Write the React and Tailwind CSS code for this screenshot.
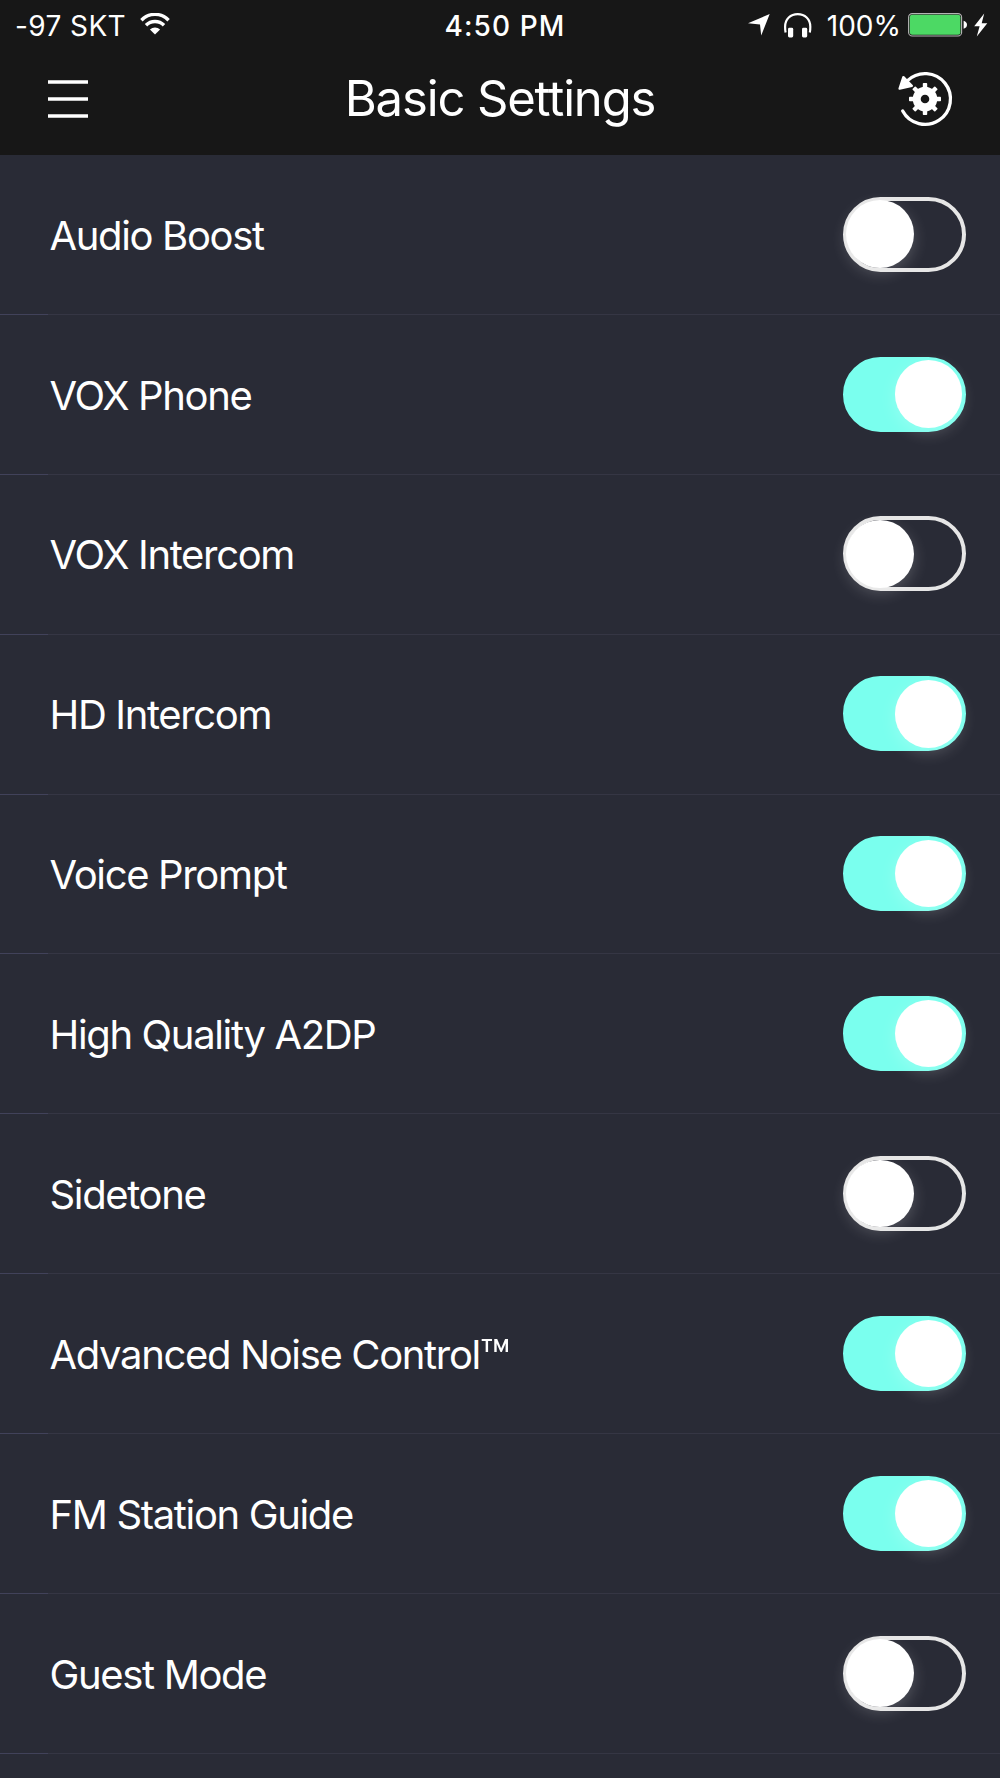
import React, { useState } from "react";

/* ================= DATA ================= */

const initialSettings = [
  { id: "audioBoost", label: "Audio Boost", enabled: false },
  { id: "voxPhone", label: "VOX Phone", enabled: true },
  { id: "voxIntercom", label: "VOX Intercom", enabled: false },
  { id: "hdIntercom", label: "HD Intercom", enabled: true },
  { id: "voicePrompt", label: "Voice Prompt", enabled: true },
  { id: "a2dp", label: "High Quality A2DP", enabled: true },
  { id: "sidetone", label: "Sidetone", enabled: false },
  { id: "noiseControl", label: "Advanced Noise Control", trademark: true, enabled: true },
  { id: "fmGuide", label: "FM Station Guide", enabled: true },
  { id: "guestMode", label: "Guest Mode", enabled: false },
];

/* ================= ICONS ================= */

function WifiIcon() {
  return (
    <svg width="30" height="22" viewBox="0 0 30 22" fill="none" stroke="white">
      <path d="M1.4 7.2C9 -0.6 21 -0.6 28.6 7.2" strokeWidth="3.4" />
      <path d="M6 12.3C11 7.2 19 7.2 24 12.3" strokeWidth="3.4" />
      <path d="M15 21.6L9.9 16.4C12.8 13.7 17.2 13.7 20.1 16.4Z" fill="white" stroke="none" />
    </svg>
  );
}

function LocationIcon() {
  return (
    <svg width="22" height="22" viewBox="0 0 22 22" fill="white">
      <path d="M21.7 0L13.2 21.6L12 10.6L0 9.3Z" />
    </svg>
  );
}

function HeadphonesIcon() {
  return (
    <svg width="28" height="25" viewBox="0 0 28 25" fill="none">
      <path
        d="M1.6 19.5C1.1 17.5 1.1 15 1.1 13.7C1.1 6 6.6 1.1 13.7 1.1S26.3 6 26.3 13.7C26.3 15 26.3 17.5 25.8 19.5"
        stroke="white"
        strokeWidth="2.2"
      />
      <rect x="4" y="14.8" width="5.2" height="9.6" rx="1.4" fill="white" />
      <rect x="18" y="14.8" width="5.2" height="9.6" rx="1.4" fill="white" />
    </svg>
  );
}

function BatteryIcon() {
  return (
    <svg width="60" height="24" viewBox="0 0 60 24" fill="none">
      <rect x="0.6" y="0.6" width="53" height="22.4" rx="3.6" stroke="#b4b4b4" strokeWidth="1.1" />
      <rect x="1.8" y="1.8" width="50.6" height="20" rx="2.4" fill="#4cd964" />
      <path d="M55.6 7.8C58 8.6 59 10 59 11.8S58 15 55.6 15.8Z" fill="white" />
    </svg>
  );
}

function BoltIcon() {
  return (
    <svg width="14" height="24" viewBox="0 0 14 24" fill="white">
      <path d="M10.2 0.5L0.2 13.2H5.6L2.8 23.6L13.3 10.3H7.7Z" />
    </svg>
  );
}

function MenuIcon() {
  return (
    <svg width="40" height="40" viewBox="0 0 40 40" stroke="white" strokeWidth="3.4">
      <path d="M0 3H40M0 20H40M0 37H40" />
    </svg>
  );
}

function ResetIcon() {
  return (
    <svg width="60" height="60" viewBox="0 0 60 60" fill="none" stroke="white">
      <path d="M7.7 42A25.4 25.4 0 1 0 12.5 11.6" strokeWidth="3.3" strokeLinecap="round" />
      <path
        d="M8.4 8.2L4.6 19.6L16.8 16.8Z"
        fill="white"
        strokeWidth="2.4"
        strokeLinejoin="round"
      />
      <circle cx="30" cy="30" r="8.3" strokeWidth="8" />
      {[0, 45, 90, 135, 180, 225, 270, 315].map((angle) => (
        <rect
          key={angle}
          x="27.8"
          y="14"
          width="4.4"
          height="6"
          rx="0.8"
          fill="white"
          stroke="none"
          transform={`rotate(${angle} 30 30)`}
        />
      ))}
    </svg>
  );
}

/* ================= TOGGLE ================= */

function Toggle({ checked, label, onChange }) {
  return (
    <button
      role="switch"
      aria-checked={checked}
      aria-label={label}
      onClick={onChange}
      className={`flex h-[75px] w-[123px] items-center rounded-full border-4 ${
        checked
          ? "justify-end border-[#7affee] bg-[#7affee]"
          : "justify-start border-[#e6e6e6]"
      }`}
    >
      <span
        className={`h-[67.5px] w-[67.5px] shrink-0 rounded-full bg-white shadow-[0_5px_16px_rgba(255,255,255,0.2)] ${
          checked ? "" : "-ml-px"
        }`}
      />
    </button>
  );
}

export default function BasicSettings() {
  const [settings, setSettings] = useState(initialSettings);

  const toggleSetting = (id) => {
    setSettings((prev) =>
      prev.map((s) => (s.id === id ? { ...s, enabled: !s.enabled } : s))
    );
  };

  return (
    <div className="h-[1778px] w-[1000px] overflow-hidden bg-[#292b36] font-['Inter',sans-serif] text-white">
      <header className="h-[155px] bg-[#171717]">
        {/* ===== STATUS BAR ===== */}
        <div className="grid h-[50px] grid-cols-[1fr_auto_1fr] items-center pl-[15px] pr-3 text-[28px] leading-none">
          <div className="flex items-center gap-3.5">
            <span className="pt-px tracking-[0.4px]">-97 SKT</span>
            <span className="mb-0.5">
              <WifiIcon />
            </span>
          </div>
          <span className="pl-[7px] pt-px font-medium tracking-[1.1px]">4:50 PM</span>
          <div className="flex items-center justify-end">
            <LocationIcon />
            <span className="ml-3.5 mr-[15px]">
              <HeadphonesIcon />
            </span>
            <span className="mr-[7px] pt-px">100%</span>
            <BatteryIcon />
            <span className="ml-1.5">
              <BoltIcon />
            </span>
          </div>
        </div>

        {/* ===== TITLE BAR ===== */}
        <div className="grid h-[98px] grid-cols-[1fr_auto_1fr] items-center pl-[48px] pr-[45px]">
          <button aria-label="Menu" className="justify-self-start">
            <MenuIcon />
          </button>
          <h1 className="pb-0.5 pr-[3px] text-[49px] leading-none tracking-[-1.15px]">
            Basic Settings
          </h1>
          <button aria-label="Reset settings" className="justify-self-end">
            <ResetIcon />
          </button>
        </div>
      </header>

      {/* ===== SETTINGS ===== */}
      <ul>
        {settings.map((s) => (
          <li key={s.id} className="flex h-[159.9px] flex-col">
            <div className="flex flex-1 items-center justify-between pb-[0.6px] pl-[49.5px] pr-[34px]">
              <span className="pt-[3px] text-[40px] leading-none tracking-[-1.35px]">
                {s.label}
                {s.trademark && (
                  <span className="align-[-7px] text-[50px] leading-[0]">™</span>
                )}
              </span>
              <Toggle
                checked={s.enabled}
                label={s.label}
                onChange={() => toggleSetting(s.id)}
              />
            </div>
            <div className="flex h-px">
              <div className="w-12 bg-[#41425a]" />
              <div className="flex-1 bg-[#353644]" />
            </div>
          </li>
        ))}
      </ul>
    </div>
  );
}
